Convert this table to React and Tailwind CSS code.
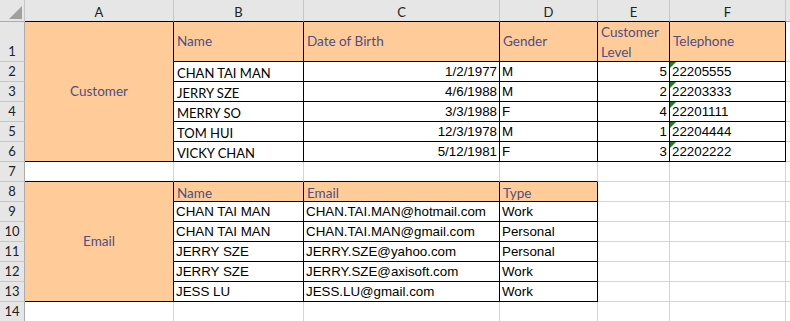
import React from 'react';

const calibri = "font-['Lato','Open_Sans',sans-serif]";
const arial = "font-['Liberation_Sans',Arial,sans-serif]";

const customers = [
    ['CHAN TAI MAN', '1/2/1977', 'M', '5', '22205555'],
    ['JERRY SZE', '4/6/1988', 'M', '2', '22203333'],
    ['MERRY SO', '3/3/1988', 'F', '4', '22201111'],
    ['TOM HUI', '12/3/1978', 'M', '1', '22204444'],
    ['VICKY CHAN', '5/12/1981', 'F', '3', '22202222'],
];

const emails = [
    ['CHAN TAI MAN', 'CHAN.TAI.MAN@hotmail.com', 'Work'],
    ['CHAN TAI MAN', 'CHAN.TAI.MAN@gmail.com', 'Personal'],
    ['JERRY SZE', 'JERRY.SZE@yahoo.com', 'Personal'],
    ['JERRY SZE', 'JERRY.SZE@axisoft.com', 'Work'],
    ['JESS LU', 'JESS.LU@gmail.com', 'Work'],
];

// plain worksheet cell, gridlines as right/bottom borders
const Cell = ({ className = '', children }) => (
    <div className={`relative flex items-center overflow-hidden whitespace-nowrap border-r border-b border-[#d4d4d4] ${className}`}>
        {children}
    </div>
);

const RowNum = ({ n, className = '' }) => (
    <div className={`flex items-end justify-center border-r border-b border-r-[#ababab] border-b-[#c6c6c6] bg-[#e6e6e6] pb-[2px] ${calibri} text-[13px] leading-[16px] text-[#222] ${className}`}>
        {n}
    </div>
);

const TextFlag = () => (
    <svg className="absolute left-0 top-0" width="6" height="6" viewBox="0 0 6 6">
        <polygon points="0,0 6,0 0,6" fill="#1d7f1d" />
    </svg>
);

const headStyle = `bg-[#ffcc99] ${calibri} text-[13.5px] text-[#4f4e80]`;
const bodyCalibri = `${calibri} text-[13px] leading-[16px] pt-[2px] text-black`;
const bodyArial = `${arial} text-[13.33px] leading-[16px] text-black`;

export default function App() {
    const letters = ['A', 'B', 'C', 'D', 'E', 'F'];

    return (
        <div className="relative h-[321px] w-[790px] overflow-hidden bg-white">
            <div className="grid grid-cols-[25px_149px_130px_196px_98px_72px_116px_1fr] grid-rows-[22px_40px_repeat(13,20px)]">
                {/* column headers */}
                <div className="border-r border-b border-r-[#c6c6c6] border-b-[#ababab] bg-[#e6e6e6]" />
                {letters.map((l) => (
                    <div key={l} className={`flex items-center justify-center border-r border-b border-r-[#c6c6c6] border-b-black bg-[#e6e6e6] pt-[3px] ${calibri} text-[13px] leading-[16px] text-[#222]`}>
                        {l}
                    </div>
                ))}
                <div className="border-b border-b-[#ababab] bg-[#e6e6e6]" />

                {/* row 1 - customer headers */}
                <RowNum n="1" />
                <div className={`row-span-6 flex items-center justify-center border-r border-b border-black ${headStyle}`}>
                    Customer
                </div>
                <Cell className={`border-r-black border-b-black pl-[3px] ${headStyle}`}>Name</Cell>
                <Cell className={`border-r-black border-b-black pl-[3px] ${headStyle}`}>Date of Birth</Cell>
                <Cell className={`border-r-black border-b-black pl-[3px] ${headStyle}`}>Gender</Cell>
                <Cell className={`whitespace-normal border-r-black border-b-black pl-[3px] leading-[20px] ${headStyle}`}>
                    <span>Customer<br />Level</span>
                </Cell>
                <Cell className={`border-r-black border-b-black pl-[3px] ${headStyle}`}>Telephone</Cell>
                <Cell className="border-r-0" />

                {/* rows 2-6 */}
                {customers.map((c, i) => (
                    <React.Fragment key={i}>
                        <RowNum n={i + 2} />
                        <Cell className={`border-r-black border-b-black pl-[3px] ${bodyCalibri}`}>{c[0]}</Cell>
                        <Cell className={`justify-end border-r-black border-b-black pr-[2px] ${bodyArial}`}>{c[1]}</Cell>
                        <Cell className={`border-r-black border-b-black pl-[2px] ${bodyArial}`}>{c[2]}</Cell>
                        <Cell className={`justify-end border-r-black border-b-black pr-[2px] ${bodyArial}`}>{c[3]}</Cell>
                        <Cell className={`border-r-black border-b-black pl-[2px] ${bodyArial}`}>
                            <TextFlag />
                            {c[4]}
                        </Cell>
                        <Cell className="border-r-0" />
                    </React.Fragment>
                ))}

                {/* row 7 */}
                <RowNum n="7" />
                <Cell className="border-b-black" />
                <Cell className="border-b-black" />
                <Cell className="border-b-black" />
                <Cell className="border-b-black" />
                <Cell />
                <Cell />
                <Cell className="border-r-0" />

                {/* row 8 - email headers */}
                <RowNum n="8" />
                <div className={`row-span-6 flex items-center justify-center border-r border-b border-black ${headStyle}`}>
                    Email
                </div>
                <Cell className={`border-r-black border-b-black pl-[3px] pt-[2px] leading-[16px] ${headStyle}`}>Name</Cell>
                <Cell className={`border-r-black border-b-black pl-[3px] pt-[2px] leading-[16px] ${headStyle}`}>Email</Cell>
                <Cell className={`border-r-black border-b-black pl-[3px] pt-[2px] leading-[16px] ${headStyle}`}>Type</Cell>
                <Cell />
                <Cell />
                <Cell className="border-r-0" />

                {/* rows 9-13 */}
                {emails.map((e, i) => (
                    <React.Fragment key={i}>
                        <RowNum n={i + 9} />
                        <Cell className={`border-r-black border-b-black pl-[2px] ${bodyArial}`}>{e[0]}</Cell>
                        <Cell className={`border-r-black border-b-black pl-[2px] ${bodyArial}`}>{e[1]}</Cell>
                        <Cell className={`border-r-black border-b-black pl-[2px] ${bodyArial}`}>{e[2]}</Cell>
                        <Cell />
                        <Cell />
                        <Cell className="border-r-0" />
                    </React.Fragment>
                ))}

                {/* row 14 */}
                <RowNum n="14" />
                <Cell />
                <Cell />
                <Cell />
                <Cell />
                <Cell />
                <Cell />
                <Cell className="border-r-0" />
            </div>

            {/* select-all corner triangle, drawn over the corner cell */}
            <svg className="absolute left-[9px] top-[6px] z-10" width="13" height="13" viewBox="0 0 13 13">
                <path d="M13 0 L13 13 L0 13 Z" fill="#a0a0a0" />
            </svg>
        </div>
    );
}
